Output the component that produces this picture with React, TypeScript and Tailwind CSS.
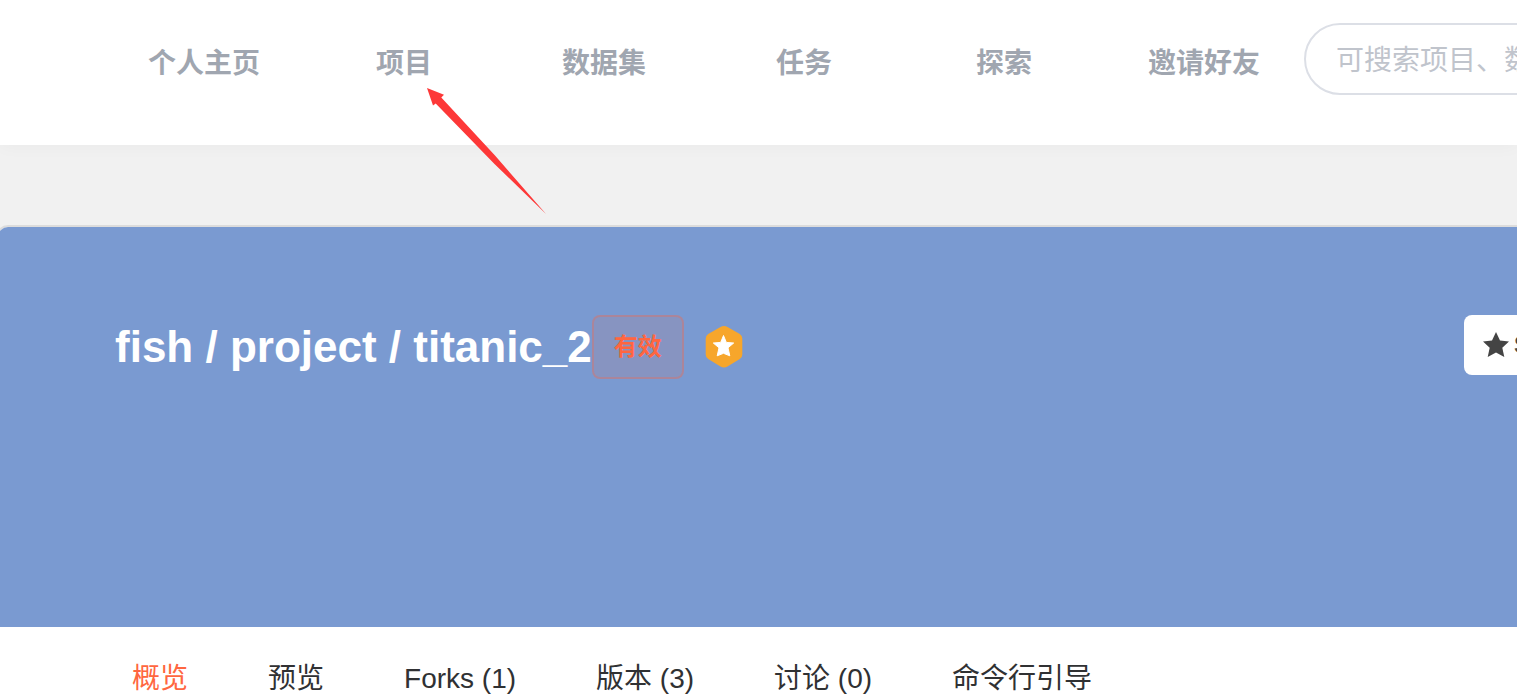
const NAV_ITEMS = ["个人主页", "项目", "数据集", "任务", "探索", "邀请好友"];

const TABS = ["概览", "预览", "Forks (1)", "版本 (3)", "讨论 (0)", "命令行引导"];

function Header() {
  return (
    <header className="relative z-10 flex h-[145px] items-start bg-white pl-[104px] shadow-[0_2px_16px_rgba(0,0,0,0.03)]">
      <nav className="flex shrink-0 pt-11">
        {NAV_ITEMS.map((item) => (
          <a
            key={item}
            href="#"
            className="w-[200px] text-center text-[28px] leading-10 font-bold text-[#a0a6b0]"
          >
            {item}
          </a>
        ))}
      </nav>
      <input
        type="search"
        aria-label="搜索"
        placeholder="可搜索项目、数据集、任务"
        className="mt-[23px] h-[72px] w-[480px] shrink-0 rounded-full border-2 border-[#dcdfe6] bg-white px-[30px] pt-1 text-[28px] text-[#606266] placeholder:text-[#c0c4cc]"
      />
    </header>
  );
}

function Badge() {
  return (
    <svg
      viewBox="0 0 38 44"
      className="h-11 w-[38px] shrink-0"
      role="img"
      aria-label="推荐"
    >
      <path
        d="M15.500 2Q19 0.200 22.500 2L34.800 9Q37.300 10.500 37.300 13.500V29.500Q37.300 32.500 34.800 34L22.500 41.500Q19 43.500 15.500 41.500L3.200 34Q0.700 32.500 0.700 29.500V13.500Q0.700 10.500 3.200 9Z"
        fill="#f7a62b"
      />
      <path
        d="M18.500 10.500L21.300 17.400L28.700 18L23 22.800L24.800 30.800L18.500 28.300L12.200 30.800L14 22.800L8.300 18L15.700 17.400Z"
        fill="#fff"
        stroke="#fff"
        strokeLinejoin="round"
      />
    </svg>
  );
}

function Hero() {
  return (
    <div className="flex h-[400px] items-start bg-[#7a9ad1] pt-[88px] pl-[117px]">
      <h1 className="shrink-0 text-[44px] leading-[64px] font-bold text-white">
        fish / project / titanic_2
      </h1>
      <span className="h-16 shrink-0 rounded-lg border-2 border-[#ff6640]/30 bg-[#ff6640]/10 px-5 text-2xl leading-[60px] font-bold text-[#ff6640]">
        有效
      </span>
      <div className="flex h-16 items-center pl-[21px]">
        <Badge />
      </div>
      <div className="ml-auto w-[53px] shrink-0">
        <button
          type="button"
          className="flex h-[60px] w-[140px] items-center gap-1 rounded-lg bg-white pl-[18px] text-2xl font-bold text-[#444]"
        >
          <svg viewBox="0 0 28 28" className="size-7 shrink-0" aria-hidden="true">
            <path
              d="M14 1L18 9.500L27 10.500L20.300 16.800L22.300 26L14 21.500L5.700 26L7.700 16.800L1 10.500L10 9.500Z"
              fill="#444"
            />
          </svg>
          Star
        </button>
      </div>
    </div>
  );
}

function Tabs() {
  return (
    <nav className="flex gap-20 bg-white pt-8 pb-4 pl-[134px]">
      {TABS.map((tab, index) => (
        <a
          key={tab}
          href="#"
          className={
            index === 0
              ? "shrink-0 text-[28px] leading-10 text-[#ff6640]"
              : "shrink-0 text-[28px] leading-10 text-[#303133]"
          }
        >
          {tab}
        </a>
      ))}
    </nav>
  );
}

function Pointer() {
  return (
    <svg
      viewBox="0 0 120 127"
      className="pointer-events-none absolute top-[88px] left-[427px] z-20 h-[127px] w-[120px]"
      aria-hidden="true"
    >
      <path
        d="M0 0L17 6.700L14.300 9.500L68 67.500L119 126L67.500 76L8.700 15.500L6 17.500Z"
        fill="#fd3838"
      />
    </svg>
  );
}

export default function App() {
  return (
    <div className="relative h-screen overflow-hidden bg-[#f1f1f1] font-['Liberation_Sans','Noto_Sans_CJK_SC',sans-serif]">
      <Header />
      <main className="mt-20 -ml-1">
        <section className="overflow-hidden rounded-tl-xl border-2 border-r-0 border-[#dcdcdc] bg-white">
          <Hero />
          <Tabs />
        </section>
      </main>
      <Pointer />
    </div>
  );
}
